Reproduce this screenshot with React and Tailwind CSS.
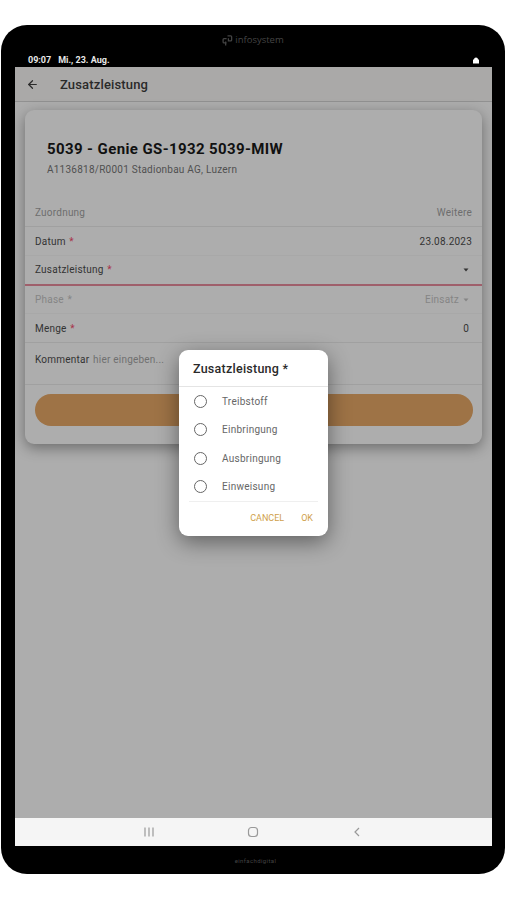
import { ArrowLeft } from "lucide-react";

const options = ["Treibstoff", "Einbringung", "Ausbringung", "Einweisung"];

function Required({ className = "text-[#a8324a]" }) {
  return <span className={className}> *</span>;
}

function Caret() {
  return (
    <svg viewBox="0 0 6 4" className="w-[6px] h-[4px]">
      <path d="M0.5 0.5h5L3 3.5z" fill="currentColor" />
    </svg>
  );
}

function Logo() {
  return (
    <svg viewBox="0 0 12 14" className="w-[11px] h-[13px]" fill="none" stroke="#444" strokeWidth="1.4">
      <path d="M5 5H2.200a1 1 0 0 0-1 1v2.500a1 1 0 0 0 1 1h2.800M4 8v4.500" />
      <path d="M6 2h3.500a1 1 0 0 1 1 1v3.500a1 1 0 0 1-1 1H7V4.500" />
    </svg>
  );
}

function Row({ className = "", children }) {
  return (
    <div className={`flex items-center justify-between px-[10px] text-[10px] tracking-[0.22px] ${className}`}>
      {children}
    </div>
  );
}

function DetailCard() {
  return (
    <div className="mx-[10px] mt-[8px] h-[334px] rounded-[9px] bg-[#adadad] shadow-[0_4px_14px_rgba(0,0,0,0.38)] text-[#333]">
      {/* Title */}
      <div className="h-[88px] pl-[22px] pt-[29px]">
        <h2 className="text-[15px] leading-[20px] font-bold text-[#111] tracking-[0.39px] whitespace-nowrap">
          5039 - Genie GS-1932 5039-MIW
        </h2>
        <p className="mt-[4px] text-[10px] leading-[14px] tracking-[0.24px] text-[#505050]">
          A1136818/R0001 Stadionbau AG, Luzern
        </p>
      </div>

      {/* Fields */}
      <Row className="h-[29px] border-b border-[#a0a0a0] text-[#6d6d6d]">
        <span>Zuordnung</span>
        <span>Weitere</span>
      </Row>
      <Row className="h-[29px] border-b border-[#a8a8a8]">
        <span>Datum<Required className="text-[#a8324a] ml-px" /></span>
        <span>23.08.2023</span>
      </Row>
      <Row className="h-[30px] border-b-2 border-[#9f5f6b] pb-px">
        <span>Zusatzleistung<Required className="text-[#a8324a] ml-px" /></span>
        <span className="mr-[3px]"><Caret /></span>
      </Row>
      <Row className="h-[28px] border-b border-[#a8a8a8] text-[#858585]">
        <span>Phase<Required className="ml-px" /></span>
        <span className="flex items-center gap-[4px] mr-[3px]">Einsatz <Caret /></span>
      </Row>
      <Row className="h-[29px] border-b border-[#a0a0a0]">
        <span>Menge<Required className="text-[#a8324a] ml-px" /></span>
        <span className="mr-[3px]">0</span>
      </Row>
      <Row className="h-[42px] border-b border-[#a0a0a0] pb-[9px]">
        <span>
          Kommentar <span className="ml-[1px] text-[#707070]">hier eingeben...</span>
        </span>
      </Row>
      <button className="block mx-[10px] mt-[9px] w-[438px] h-[32px] rounded-full bg-[#9e7346]" aria-label="Speichern" />
    </div>
  );
}

function SelectDialog() {
  return (
    <div className="absolute left-[164px] top-[283px] w-[149px] h-[186px] rounded-[9px] bg-white shadow-[0_6px_22px_rgba(0,0,0,0.45)]">
      <h3 className="h-[37px] pl-[14px] pt-[9px] text-[12.5px] leading-[20px] font-medium tracking-[0.25px] text-[#2a2a2a] border-b border-[#e4e4e4]">
        Zusatzleistung *
      </h3>
      <ul className="mx-[10px] h-[115px] border-b border-[#efefef]">
        {options.map((option) => (
          <li key={option} className="flex items-center h-[28.5px] pl-[5px] text-[10px] tracking-[0.26px] text-[#666]">
            <span className="w-[13px] h-[13px] mr-[15px] rounded-full border-[1.5px] border-[#666]" />
            {option}
          </li>
        ))}
      </ul>
      <div className="flex justify-end gap-[17px] pr-[15px] pt-[10px] text-[9px] leading-[13px] text-[#cf9f4b]">
        <button>CANCEL</button>
        <button>OK</button>
      </div>
    </div>
  );
}

export default function App() {
  return (
    <div className="w-[506px] h-[900px] bg-white pt-[25px] px-px font-['Roboto',sans-serif] overflow-hidden">
      <div className="h-[849px] rounded-[26px] bg-black px-[14px] flex flex-col">
        <div className="h-[28px] pt-[3px] flex items-center justify-center gap-[2px] text-[9.5px] text-[#444] font-['Open_Sans',sans-serif]">
          <Logo />
          infosystem
        </div>

        {/* Status bar */}
        <div className="h-[14px] pt-[2px] flex items-center justify-between pl-[13px] pr-[12px] text-[9px] font-bold text-[#e8e8e8]">
          <span className="flex gap-[7px]">
            <span>09:07</span>
            <span>Mi., 23. Aug.</span>
          </span>
          {/* Lock indicator */}
          <svg viewBox="0 0 6 7" className="w-[6px] h-[7px] -mt-px" fill="#fff">
            <path d="M1 2.500a2 2 0 0 1 4 0h1v4H0v-4z" />
          </svg>
        </div>

        {/* Screen */}
        <div className="relative w-[477px] h-[779px] bg-[#adadad] flex flex-col overflow-hidden">
          <header className="h-[35px] shrink-0 flex items-center border-b border-[#919191] bg-[#aaa9a8] pl-[11px] text-[#2a2a2a]">
            <ArrowLeft size={13} strokeWidth={2.2} />
            <h1 className="ml-[21px] pt-px text-[13px] font-medium tracking-[0.15px]">Zusatzleistung</h1>
          </header>
          <main className="flex-1">
            <DetailCard />
          </main>
          <nav className="h-[28px] shrink-0 bg-[#f5f5f5] flex items-center justify-center text-[#999]">
            <svg width="220" height="12" viewBox="0 0 220 12" fill="none" stroke="currentColor" strokeWidth="1.2">
              <path d="M1 1.500v9M5 1.500v9M9 1.500v9" />
              <rect x="104.500" y="1.500" width="9" height="9" rx="3" />
              <path d="M215 2l-4 4 4 4" />
            </svg>
          </nav>
          <SelectDialog />
        </div>
        <div className="flex-1 flex items-center justify-center pl-[5px] pt-px text-[6px] tracking-[0.4px] text-[#444]">
          einfachdigital
        </div>
      </div>
    </div>
  );
}
